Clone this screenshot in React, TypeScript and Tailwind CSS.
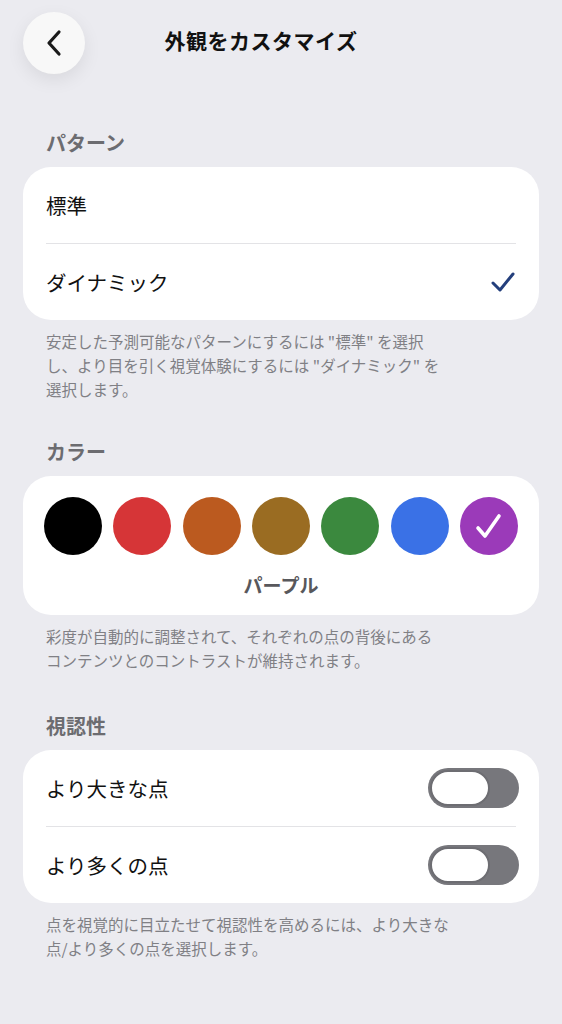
const font = {
  fontFamily: '"Noto Sans CJK JP", "Noto Sans", sans-serif',
};

const colors = [
  "#000000",
  "#d63537",
  "#bb5a1f",
  "#9a6c22",
  "#3b893e",
  "#3a71e6",
  "#9b3ab9",
];

function Toggle() {
  return (
    <div className="flex h-[40px] w-[91px] items-center rounded-full bg-[#77777c] p-[2px]">
      <div className="h-full w-[60px] rounded-full border-2 border-[#6d6d72] bg-white" />
    </div>
  );
}

function Header({ children }: { children: React.ReactNode }) {
  return (
    <h2 className="px-[46px] pb-[10px] text-[20px] font-bold leading-[28px] text-[#6c6c70]">
      {children}
    </h2>
  );
}

function Footer({ children }: { children: React.ReactNode }) {
  return (
    <p className="px-[46px] pt-[9px] text-[15.5px] leading-[24px] text-[#808085]">
      {children}
    </p>
  );
}

export default function App() {
  return (
    <div style={font} className="min-h-[1024px] w-full bg-[#ebebf0] text-[#111]">
      {/* top bar */}
      <div className="relative flex h-[86px] items-center justify-center">
        <button className="absolute left-[23px] top-[12px] flex h-[62px] w-[62px] items-center justify-center rounded-full bg-[#f8f8f8] shadow-[0_6px_18px_rgba(0,0,0,0.08)]">
          <svg width="20" height="28" viewBox="0 0 20 28" fill="none">
            <path
              d="M15 3 L5 14 L15 25"
              stroke="#1a1a1a"
              strokeWidth="3.2"
              strokeLinecap="round"
              strokeLinejoin="round"
            />
          </svg>
        </button>
        <h1 className="mb-[4px] mr-[40px] text-[21px] font-bold tracking-[0.5px]">
          外観をカスタマイズ
        </h1>
      </div>

      {/* パターン */}
      <div className="pt-[43px]">
        <Header>パターン</Header>
        <div className="mx-[23px] rounded-[28px] bg-white">
          <div className="flex h-[76px] items-center px-[23px] text-[20.5px]">
            標準
          </div>
          <div className="mx-[23px] h-px bg-[#e3e3e6]" />
          <div className="flex h-[76px] items-center justify-between px-[23px] text-[20.5px]">
            <span>ダイナミック</span>
            <svg width="26" height="24" viewBox="0 0 26 24" fill="none">
              <path
                d="M3 13 L10 20 L23 4"
                stroke="#243f7c"
                strokeWidth="3"
                strokeLinecap="round"
                strokeLinejoin="round"
              />
            </svg>
          </div>
        </div>
        <Footer>
          安定した予測可能なパターンにするには "標準" を選択
          <br />
          し、より目を引く視覚体験にするには "ダイナミック" を
          <br />
          選択します。
        </Footer>
      </div>

      {/* カラー */}
      <div className="pt-[37px]">
        <Header>カラー</Header>
        <div className="mx-[23px] rounded-[28px] bg-white px-[21px] pb-[16px] pt-[21px]">
          <div className="flex justify-between">
            {colors.map((c, i) => (
              <div
                key={c}
                className="flex h-[58px] w-[58px] items-center justify-center rounded-full"
                style={{ backgroundColor: c }}
              >
                {i === colors.length - 1 && (
                  <svg width="30" height="28" viewBox="0 0 30 28" fill="none">
                    <path
                      d="M4 16 L11 24 L25 4"
                      stroke="#ffffff"
                      strokeWidth="3.6"
                      strokeLinecap="round"
                      strokeLinejoin="round"
                    />
                  </svg>
                )}
              </div>
            ))}
          </div>
          <p className="pt-[16px] text-center text-[19px] font-bold leading-[28px] text-[#58585c]">
            パープル
          </p>
        </div>
        <Footer>
          彩度が自動的に調整されて、それぞれの点の背後にある
          <br />
          コンテンツとのコントラストが維持されます。
        </Footer>
      </div>

      {/* 視認性 */}
      <div className="pt-[40px]">
        <Header>視認性</Header>
        <div className="mx-[23px] rounded-[28px] bg-white">
          <div className="flex h-[76px] items-center justify-between pl-[23px] pr-[20px] text-[20.5px]">
            <span>より大きな点</span>
            <Toggle />
          </div>
          <div className="mx-[23px] h-px bg-[#e3e3e6]" />
          <div className="flex h-[76px] items-center justify-between pl-[23px] pr-[20px] text-[20.5px]">
            <span>より多くの点</span>
            <Toggle />
          </div>
        </div>
        <Footer>
          点を視覚的に目立たせて視認性を高めるには、より大きな
          <br />
          点/より多くの点を選択します。
        </Footer>
      </div>
    </div>
  );
}
